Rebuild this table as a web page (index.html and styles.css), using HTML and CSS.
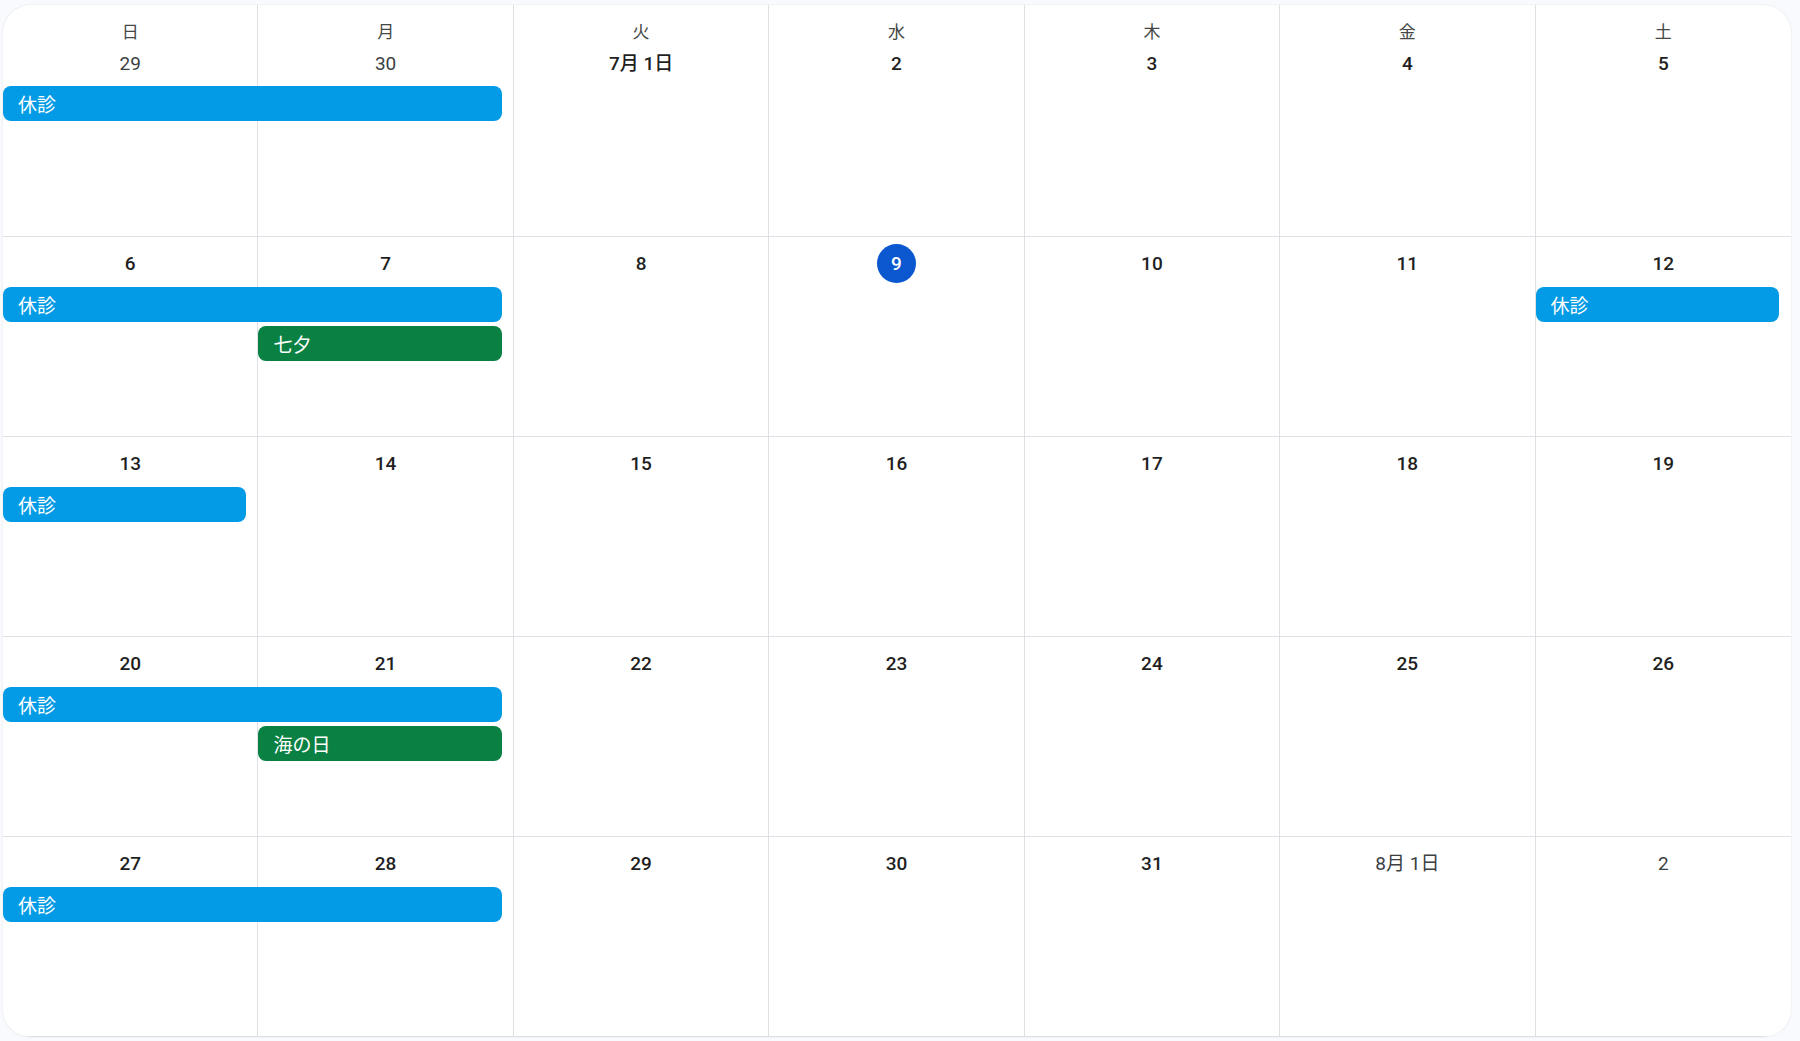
FILE: index.html
```html
<!DOCTYPE html>
<html lang="ja">
<head>
<meta charset="utf-8">
<title>カレンダー</title>
<link rel="stylesheet" href="styles.css">
</head>
<body>
<div class="panel">
  <div class="week first">
    <div class="cell"><span class="dn">日</span><span class="date out">29</span></div>
    <div class="cell"><span class="dn">月</span><span class="date out">30</span></div>
    <div class="cell"><span class="dn">火</span><span class="date">7月 1日</span></div>
    <div class="cell"><span class="dn">水</span><span class="date">2</span></div>
    <div class="cell"><span class="dn">木</span><span class="date">3</span></div>
    <div class="cell"><span class="dn">金</span><span class="date">4</span></div>
    <div class="cell"><span class="dn">土</span><span class="date">5</span></div>
    <div class="ev blue r1 c1 span2">休診</div>
  </div>
  <div class="week">
    <div class="cell"><span class="date">6</span></div>
    <div class="cell"><span class="date">7</span></div>
    <div class="cell"><span class="date">8</span></div>
    <div class="cell"><span class="date today">9</span></div>
    <div class="cell"><span class="date">10</span></div>
    <div class="cell"><span class="date">11</span></div>
    <div class="cell"><span class="date">12</span></div>
    <div class="ev blue r1 c1 span2">休診</div>
    <div class="ev green r2 c2">七夕</div>
    <div class="ev blue r1 c7">休診</div>
  </div>
  <div class="week">
    <div class="cell"><span class="date">13</span></div>
    <div class="cell"><span class="date">14</span></div>
    <div class="cell"><span class="date">15</span></div>
    <div class="cell"><span class="date">16</span></div>
    <div class="cell"><span class="date">17</span></div>
    <div class="cell"><span class="date">18</span></div>
    <div class="cell"><span class="date">19</span></div>
    <div class="ev blue r1 c1">休診</div>
  </div>
  <div class="week">
    <div class="cell"><span class="date">20</span></div>
    <div class="cell"><span class="date">21</span></div>
    <div class="cell"><span class="date">22</span></div>
    <div class="cell"><span class="date">23</span></div>
    <div class="cell"><span class="date">24</span></div>
    <div class="cell"><span class="date">25</span></div>
    <div class="cell"><span class="date">26</span></div>
    <div class="ev blue r1 c1 span2">休診</div>
    <div class="ev green r2 c2">海の日</div>
  </div>
  <div class="week">
    <div class="cell"><span class="date">27</span></div>
    <div class="cell"><span class="date">28</span></div>
    <div class="cell"><span class="date">29</span></div>
    <div class="cell"><span class="date">30</span></div>
    <div class="cell"><span class="date">31</span></div>
    <div class="cell"><span class="date out">8月 1日</span></div>
    <div class="cell"><span class="date out">2</span></div>
    <div class="ev blue r1 c1 span2">休診</div>
  </div>
</div>
</body>
</html>
```
FILE: styles.css
```css
* { box-sizing: border-box; }
html, body { margin: 0; padding: 0; }
body {
  width: 1800px;
  height: 1041px;
  overflow: hidden;
  background: #f8fafd;
  font-family: Roboto, "Noto Sans CJK JP", sans-serif;
}
.panel {
  margin: 5px 0 0 3px;
  width: 1788px;
  height: 1032px;
  background: #fff;
  border-radius: 28px;
  overflow: hidden;
  box-shadow: 0 0 2px rgba(60, 64, 67, 0.14);
}
.week {
  display: grid;
  grid-template-columns: repeat(7, 1fr);
  grid-template-rows: 46px 35px 35px 1fr;
  row-gap: 4px;
  height: 200px;
  border-bottom: 1px solid #dde1e6;
}
.week.first {
  height: 232px;
  grid-template-rows: 77px 35px 35px 1fr;
}
.cell {
  grid-row: 1 / -1;
  border-right: 1px solid #dde1e6;
  display: flex;
  flex-direction: column;
  align-items: center;
  padding-top: 7px;
}
.first .cell { padding-top: 16px; }
.cell:nth-child(1) { grid-column: 1; }
.cell:nth-child(2) { grid-column: 2; }
.cell:nth-child(3) { grid-column: 3; }
.cell:nth-child(4) { grid-column: 4; }
.cell:nth-child(5) { grid-column: 5; }
.cell:nth-child(6) { grid-column: 6; }
.cell:nth-child(7) { grid-column: 7; border-right: none; }
.dn {
  font-family: "Noto Sans CJK JP", sans-serif;
  font-size: 17px;
  line-height: 20px;
  color: #444746;
}
.first .date { margin-top: 3px; }
.date {
  display: block;
  height: 39px;
  min-width: 39px;
  line-height: 39px;
  text-align: center;
  font-size: 19px;
  font-weight: 500;
  color: #1f1f1f;
  border-radius: 20px;
}
.date.out {
  font-weight: 400;
  color: #3c4043;
}
.date.today {
  background: #0b57d0;
  color: #fff;
}
.ev {
  margin-right: 12px;
  border-radius: 8px;
  padding-left: 15px;
  font-family: "Noto Sans CJK JP", sans-serif;
  font-size: 19px;
  line-height: 35px;
  color: #fff;
  white-space: nowrap;
  overflow: hidden;
}
.blue { background: #039be5; }
.green { background: #0b8043; }
.r1 { grid-row: 2; }
.r2 { grid-row: 3; }
.c1 { grid-column: 1 / span 1; }
.c2 { grid-column: 2 / span 1; }
.c7 { grid-column: 7 / span 1; }
.c1.span2 { grid-column: 1 / span 2; }
```
